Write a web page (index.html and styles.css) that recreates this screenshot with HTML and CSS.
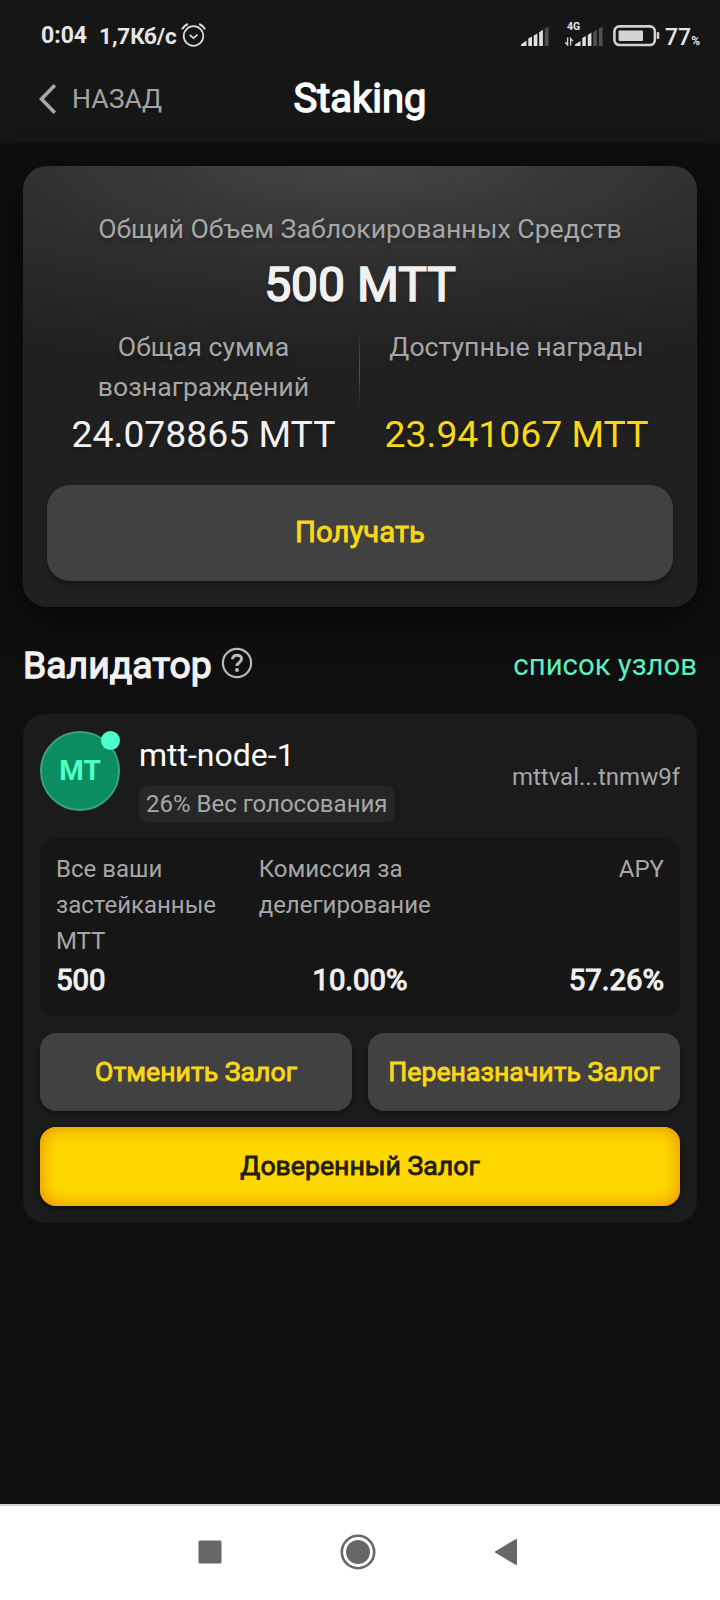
FILE: index.html
```html
<!DOCTYPE html>
<html lang="ru">
<head>
  <meta charset="UTF-8" />
  <meta name="viewport" content="width=device-width, initial-scale=1.0"/>
  <title>Staking</title>
  <link rel="stylesheet" href="styles.css">
</head>
<body>
  <header class="top">
    <div class="status-bar">
      <span class="time">0:04</span>
      <span class="speed">1,7Кб/с</span>
      <svg class="alarm" width="26" height="26" viewBox="0 0 26 26" fill="none" stroke="#dcdcdc" stroke-width="1.7">
        <circle cx="12.5" cy="14" r="9.8"/>
        <path d="M8.8 12.8l3.7 3.4 4-3.6"/>
        <path d="M1 7.2Q2.8 3.6 7 2M18.200 2Q22.200 3.600 24 7.200" stroke-width="2"/>
      </svg>
      <div class="status-right">
        <svg class="signal" width="28" height="20" viewBox="0 0 28 20" fill="#e0e0e0">
          <path d="M0 20v-1.500L5.500 14.500V20z"/>
          <path d="M7.300 20v-7.500l3.700-2V20z"/>
          <path d="M12.700 20V9.500l3.700-2V20z"/>
          <path d="M18.200 20V6.200l3.700-2.400V20z"/>
          <path d="M23.800 20V2.800L27.500 .5V20z" fill="#505050"/>
        </svg>
        <div class="mobile">
          <span class="net">4G</span>
          <svg width="38" height="20" viewBox="0 0 38 20" fill="#e0e0e0">
            <path d="M2.600 11.500V19L.3 16.300M5.600 19.500V12.500L8 15.200" fill="none" stroke="#d0d0d0" stroke-width="1.400"/>
            <path d="M10 20v-1.500L15.500 15V20z"/>
            <path d="M17.300 20v-8l3.500-2V20z"/>
            <path d="M22.800 20V9l3.600-2.500V20z"/>
            <path d="M28.200 20V6l3.700-2.300V20zM33.800 20V2.800L37.500 .5V20z" fill="#505050"/>
          </svg>
        </div>
        <svg class="battery" width="47" height="22" viewBox="0 0 47 22">
          <rect x="1.400" y="1.400" width="40.500" height="18.600" rx="5" fill="none" stroke="#d0d0d0" stroke-width="2.600"/>
          <rect x="5.500" y="5.500" width="24.500" height="10.500" rx="1" fill="#d4d4d4"/>
          <rect x="43.800" y="7" width="2.500" height="7" rx="1" fill="#d0d0d0"/>
        </svg>
        <span class="percent">77<small>%</small></span>
      </div>
    </div>
    <nav class="title-bar">
      <a href="#" class="back">
        <svg width="18" height="30" viewBox="0 0 18 30" fill="none" stroke="#a8a8a8" stroke-width="3.600">
          <path d="M15.800 1.300L2.500 15l13.300 13.700"/>
        </svg>
        НАЗАД
      </a>
      <h1>Staking</h1>
    </nav>
  </header>

  <main>
    <section class="summary">
      <p class="label total-label">Общий Объем Заблокированных Средств</p>
      <p class="total">500 MTT</p>
      <div class="rewards">
        <div class="reward">
          <p class="label">Общая сумма<br>вознаграждений</p>
          <p class="amount">24.078865 MTT</p>
        </div>
        <div class="divider"></div>
        <div class="reward">
          <p class="label">Доступные награды</p>
          <p class="amount gold">23.941067 MTT</p>
        </div>
      </div>
      <button class="btn btn-claim">Получать</button>
    </section>

    <div class="section-head">
      <h2>Валидатор</h2>
      <svg class="help" width="32" height="32" viewBox="0 0 32 32" fill="none" stroke="#b8b8b8">
        <circle cx="16" cy="16" r="14.100" stroke-width="2.200"/>
        <path d="M11.500 12.200C11.500 9.800 13.400 8.200 16 8.200s4.600 1.500 4.600 3.900c0 3.400-4.600 3.500-4.600 7" stroke-width="3"/>
        <circle cx="16" cy="23" r="2" fill="#b8b8b8" stroke="none"/>
      </svg>
      <a href="#" class="nodes-link">список узлов</a>
    </div>

    <section class="validator">
      <div class="validator-head">
        <div class="avatar">MT<span class="dot"></span></div>
        <div class="info">
          <p class="name">mtt-node-1</p>
          <span class="weight">26% Вес голосования</span>
        </div>
        <span class="address">mttval...tnmw9f</span>
      </div>
      <div class="stats">
        <p class="stat-label">Все ваши<br>застейканные<br>MTT</p>
        <p class="stat-label">Комиссия за делегирование</p>
        <p class="stat-label right">APY</p>
        <p class="stat-value">500</p>
        <p class="stat-value center">10.00%</p>
        <p class="stat-value right">57.26%</p>
      </div>
      <div class="actions">
        <button class="btn">Отменить Залог</button>
        <button class="btn">Переназначить Залог</button>
        <button class="btn btn-primary">Доверенный Залог</button>
      </div>
    </section>
  </main>

  <footer class="nav-keys">
    <svg width="24" height="24" viewBox="0 0 24 24" fill="#676767"><rect x=".5" y=".5" width="23" height="23" rx="1.500"/></svg>
    <svg width="36" height="36" viewBox="0 0 36 36" fill="#676767"><circle cx="18" cy="18" r="12"/><circle cx="18" cy="18" r="16.200" fill="none" stroke="#676767" stroke-width="2.600"/></svg>
    <svg width="24" height="28" viewBox="0 0 24 28" fill="#676767" stroke="#676767" stroke-width="2" stroke-linejoin="round"><path d="M2 14L22 2v24z"/></svg>
  </footer>
</body>
</html>
```
FILE: styles.css
```css
:root {
  --bg: #0f0f0f;
  --bar: #161616;
  --gold: #fad716;
  --mint: #5cf0c0;
  --muted: #a6a6a6;
  --text: #f1f1f1;
}

* {
  box-sizing: border-box;
}

body {
  margin: 0;
  height: 1600px;
  display: flex;
  flex-direction: column;
  background: var(--bg);
  color: var(--text);
  font-family: Roboto, "Noto Sans", sans-serif;
}

h1, h2, p {
  margin: 0;
  font-weight: 400;
}

a {
  text-decoration: none;
}

svg {
  display: block;
  flex: none;
}

.top {
  height: 143px;
  background: var(--bar);
}

.status-bar {
  display: flex;
  align-items: center;
  height: 71px;
  padding: 0 20px 0 41px;
  font-size: 23px;
  font-weight: 700;
  color: #e6e6e6;
}

.speed {
  margin-left: 12px;
  font-size: 22.5px;
  letter-spacing: -0.1px;
}

.alarm {
  margin: 0 0 2px 4px;
}

.status-right {
  display: flex;
  align-items: flex-end;
  height: 24px;
  margin: 0 0 0 auto;
}

.signal {
  margin: 0 16px 2px 0;
}

.mobile {
  display: flex;
  flex-direction: column;
  margin: 0 10px 2px 0;
}

.net {
  height: 3px;
  padding-left: 2px;
  font-size: 10.5px;
  line-height: 8px;
}

.battery {
  margin: 0 5px 1px 0;
}

.percent {
  height: 22px;
  font-size: 23px;
  font-weight: 500;
  line-height: 24px;
}

.percent small {
  font-size: 12px;
  font-weight: 700;
}

.title-bar {
  display: grid;
  grid-template-columns: 1fr auto 1fr;
  align-items: center;
  height: 56px;
  padding: 0 39px;
}

.back {
  display: flex;
  align-items: center;
  gap: 15px;
  font-size: 26.67px;
  color: #a2a2a2;
}

h1 {
  padding-bottom: 2px;
  font-size: 40px;
  color: #fff;
  -webkit-text-stroke: 1.4px;
}

main {
  flex: 1;
  padding: 23px 23px 0;
}

.summary {
  height: 441px;
  padding: 43px 24px 0;
  border-radius: 24px;
  background: radial-gradient(ellipse 760px 200px at 50% 0, #444 0%, #2e2e2e 50%, #202020 100%);
  box-shadow: 0 10px 40px rgba(0, 0, 0, 0.7);
  text-align: center;
  text-shadow: 0 4px 4px rgba(0, 0, 0, 0.25);
}

.label {
  font-size: 26.67px;
  line-height: 40px;
  color: var(--muted);
}

.total {
  font-size: 48px;
  line-height: 72px;
  -webkit-text-stroke: 1.6px;
}

.rewards {
  display: flex;
  margin-top: 6px;
}

.reward {
  flex: 1;
  display: flex;
  flex-direction: column;
  justify-content: space-between;
  height: 135px;
}

.divider {
  width: 1px;
  height: 80px;
  margin: 2px 0 0 -1px;
  background: linear-gradient(transparent, #555, transparent);
}

.amount {
  font-size: 37.33px;
  line-height: 55px;
}

.gold {
  color: var(--gold);
}

.btn {
  height: 78px;
  padding: 0;
  border: none;
  border-radius: 16px;
  background: #414141;
  box-shadow: 0 3px 5px rgba(0, 0, 0, 0.4);
  color: var(--gold);
  font-family: inherit;
  font-size: 26.67px;
  -webkit-text-stroke: 0.9px;
}

.btn-claim {
  width: 100%;
  height: 96px;
  margin-top: 23px;
  padding-bottom: 3px;
  border-radius: 23px;
  font-size: 29.33px;
}

.section-head {
  display: flex;
  align-items: center;
  height: 54px;
  margin: 32px 0 21px;
}

h2 {
  padding-bottom: 2px;
  font-size: 37.33px;
  -webkit-text-stroke: 1.3px;
}

.help {
  margin: 0 auto 6px 9px;
}

.nodes-link {
  padding-bottom: 2px;
  font-size: 29.33px;
  color: var(--mint);
}

.validator {
  height: 509px;
  padding: 17px;
  border-radius: 22px;
  background: #1b1b1b;
}

.validator-head {
  display: flex;
  height: 91px;
}

.avatar {
  position: relative;
  width: 80px;
  height: 80px;
  border: 2px solid #38a27c;
  border-radius: 50%;
  background: #0c8d61;
  color: #4dffc8;
  font-size: 28px;
  font-weight: 700;
  line-height: 76px;
  text-align: center;
}

.dot {
  position: absolute;
  top: -2px;
  right: -2px;
  width: 19px;
  height: 19px;
  border-radius: 50%;
  background: #4dffc8;
}

.info {
  display: flex;
  flex-direction: column;
  align-items: flex-start;
  margin-left: 19px;
}

.name {
  margin-bottom: 7px;
  font-size: 32px;
  line-height: 48px;
  color: #fff;
}

.weight {
  padding: 0 6px 0 7px;
  border-radius: 7px;
  background: #262626;
  font-size: 24px;
  line-height: 36px;
  color: var(--muted);
}

.address {
  align-self: center;
  margin-left: auto;
  font-size: 24px;
  color: var(--muted);
}

.stats {
  display: grid;
  grid-template-columns: repeat(3, 1fr);
  align-content: start;
  height: 179px;
  margin: 16px 0;
  padding: 13px 16px 0;
  border-radius: 16px;
  background: var(--bar);
}

.stat-label {
  height: 108px;
  font-size: 24px;
  line-height: 36px;
  color: var(--muted);
}

.stat-value {
  font-size: 29.33px;
  line-height: 42px;
  -webkit-text-stroke: 1.1px;
}

.center {
  text-align: center;
}

.right {
  text-align: right;
}

.actions {
  display: grid;
  grid-template-columns: 1fr 1fr;
  gap: 16px;
}

.btn-primary {
  grid-column: span 2;
  height: 79px;
  padding-bottom: 2px;
  background: #ffd700;
  box-shadow: inset 0 0 18px #e08600, 0 2px 5px rgba(0, 0, 0, 0.6);
  color: #241d05;
}

.nav-keys {
  display: flex;
  align-items: center;
  height: 96px;
  padding: 0 202px 2px 198px;
  justify-content: space-between;
  border-top: 2px solid #d2d2d2;
  background: #fff;
}
```
